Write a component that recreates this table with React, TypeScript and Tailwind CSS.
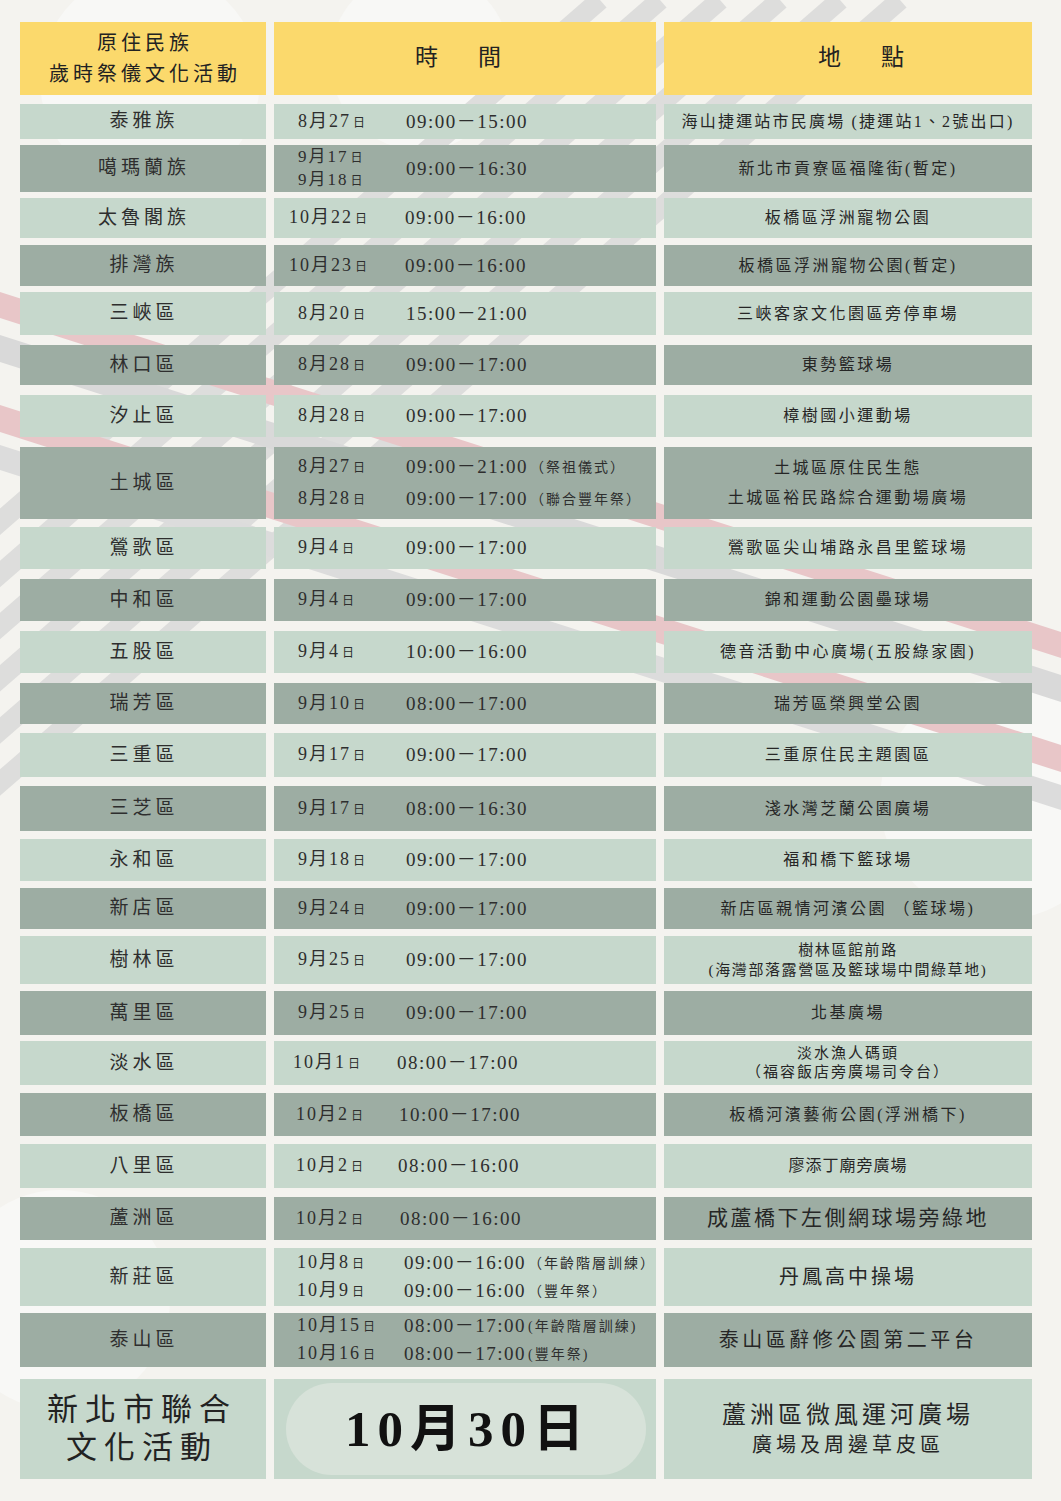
import React from 'react';

type Slot = { dates: string[]; time: string; note?: string };
type Row = {
    name: string;
    dark: boolean;
    box: string;
    slots: Slot[];
    slotCls?: string;
    dateCls?: string;
    place: string[];
    placeCls?: string;
};

const serif = "font-['Liberation_Serif','Noto_Sans_CJK_TC',serif]";

const rows: Row[] = [
    { name: '泰雅族', dark: false, box: 'mt-[9px] h-[35px]', slots: [{ dates: ['8月27'], time: '09:00－15:00' }], place: ['海山捷運站市民廣場 (捷運站1、2號出口)'], placeCls: 'text-[16px] tracking-[2.2px]' },
    { name: '噶瑪蘭族', dark: true, box: 'mt-[6px] h-[47px]', slots: [{ dates: ['9月17', '9月18'], time: '09:00－16:30' }], place: ['新北市貢寮區福隆街(暫定)'] },
    { name: '太魯閣族', dark: false, box: 'mt-[6px] h-[40px]', dateCls: 'pl-[15px] w-[131px]', slots: [{ dates: ['10月22'], time: '09:00－16:00' }], place: ['板橋區浮洲寵物公園'] },
    { name: '排灣族', dark: true, box: 'mt-[7px] h-[41px]', dateCls: 'pl-[15px] w-[131px]', slots: [{ dates: ['10月23'], time: '09:00－16:00' }], place: ['板橋區浮洲寵物公園(暫定)'] },
    { name: '三峽區', dark: false, box: 'mt-[6px] h-[43px]', slots: [{ dates: ['8月20'], time: '15:00－21:00' }], place: ['三峽客家文化園區旁停車場'] },
    { name: '林口區', dark: true, box: 'mt-[10px] h-[40px]', slots: [{ dates: ['8月28'], time: '09:00－17:00' }], place: ['東勢籃球場'] },
    { name: '汐止區', dark: false, box: 'mt-[10px] h-[42px]', slots: [{ dates: ['8月28'], time: '09:00－17:00' }], place: ['樟樹國小運動場'] },
    {
        name: '土城區', dark: true, box: 'mt-[10px] h-[72px]', slotCls: 'gap-[6px]',
        slots: [
            { dates: ['8月27'], time: '09:00－21:00', note: '（祭祖儀式）' },
            { dates: ['8月28'], time: '09:00－17:00', note: '（聯合豐年祭）' },
        ],
        place: ['土城區原住民生態', '土城區裕民路綜合運動場廣場'], placeCls: 'text-[16px] tracking-[2.5px] leading-[30px]',
    },
    { name: '鶯歌區', dark: false, box: 'mt-[8px] h-[42px]', slots: [{ dates: ['9月4'], time: '09:00－17:00' }], place: ['鶯歌區尖山埔路永昌里籃球場'] },
    { name: '中和區', dark: true, box: 'mt-[10px] h-[42px]', slots: [{ dates: ['9月4'], time: '09:00－17:00' }], place: ['錦和運動公園壘球場'] },
    { name: '五股區', dark: false, box: 'mt-[10px] h-[42px]', slots: [{ dates: ['9月4'], time: '10:00－16:00' }], place: ['德音活動中心廣場(五股綠家園)'] },
    { name: '瑞芳區', dark: true, box: 'mt-[10px] h-[41px]', slots: [{ dates: ['9月10'], time: '08:00－17:00' }], place: ['瑞芳區榮興堂公園'] },
    { name: '三重區', dark: false, box: 'mt-[9px] h-[44px]', slots: [{ dates: ['9月17'], time: '09:00－17:00' }], place: ['三重原住民主題園區'] },
    { name: '三芝區', dark: true, box: 'mt-[9px] h-[45px]', slots: [{ dates: ['9月17'], time: '08:00－16:30' }], place: ['淺水灣芝蘭公園廣場'] },
    { name: '永和區', dark: false, box: 'mt-[8px] h-[42px]', slots: [{ dates: ['9月18'], time: '09:00－17:00' }], place: ['福和橋下籃球場'] },
    { name: '新店區', dark: true, box: 'mt-[7px] h-[41px]', slots: [{ dates: ['9月24'], time: '09:00－17:00' }], place: ['新店區親情河濱公園 （籃球場)'] },
    { name: '樹林區', dark: false, box: 'mt-[7px] h-[48px]', slots: [{ dates: ['9月25'], time: '09:00－17:00' }], place: ['樹林區館前路', '(海灣部落露營區及籃球場中間綠草地)'], placeCls: 'text-[15px] tracking-[1.6px] leading-[20px]' },
    { name: '萬里區', dark: true, box: 'mt-[7px] h-[44px]', slots: [{ dates: ['9月25'], time: '09:00－17:00' }], place: ['北基廣場'] },
    { name: '淡水區', dark: false, box: 'mt-[6px] h-[44px]', dateCls: 'pl-[19px] w-[123px]', slots: [{ dates: ['10月1'], time: '08:00－17:00' }], place: ['淡水漁人碼頭', '（福容飯店旁廣場司令台）'], placeCls: 'text-[15px] tracking-[2px] leading-[19px]' },
    { name: '板橋區', dark: true, box: 'mt-[8px] h-[43px]', dateCls: 'pl-[22px] w-[125px]', slots: [{ dates: ['10月2'], time: '10:00－17:00' }], place: ['板橋河濱藝術公園(浮洲橋下)'] },
    { name: '八里區', dark: false, box: 'mt-[8px] h-[44px]', dateCls: 'pl-[22px] w-[124px]', slots: [{ dates: ['10月2'], time: '08:00－16:00' }], place: ['廖添丁廟旁廣場'], placeCls: 'text-[16px] tracking-[1px]' },
    { name: '蘆洲區', dark: true, box: 'mt-[9px] h-[43px]', dateCls: 'pl-[22px] w-[126px]', slots: [{ dates: ['10月2'], time: '08:00－16:00' }], place: ['成蘆橋下左側網球場旁綠地'], placeCls: 'text-[21px] tracking-[2.5px]' },
    {
        name: '新莊區', dark: false, box: 'mt-[8px] h-[58px]', dateCls: 'pl-[23px] w-[130px]', slotCls: 'gap-[2px]',
        slots: [
            { dates: ['10月8'], time: '09:00－16:00', note: '（年齡階層訓練）' },
            { dates: ['10月9'], time: '09:00－16:00', note: '（豐年祭）' },
        ],
        place: ['丹鳳高中操場'], placeCls: 'text-[20px] tracking-[3px]',
    },
    {
        name: '泰山區', dark: true, box: 'mt-[7px] h-[54px]', dateCls: 'pl-[23px] w-[130px]', slotCls: 'gap-[2px]',
        slots: [
            { dates: ['10月15'], time: '08:00－17:00', note: '(年齡階層訓練)' },
            { dates: ['10月16'], time: '08:00－17:00', note: '(豐年祭)' },
        ],
        place: ['泰山區辭修公園第二平台'], placeCls: 'text-[20px] tracking-[3.5px]',
    },
];

function DateText({ d, cls }: { d: string; cls: string }) {
    return (
        <div className={cls}>
            {d}
            <span className="text-[12px] ml-[2px]">日</span>
        </div>
    );
}

// faint diagonal ribbons behind the table
function Background() {
    const grays = [0, 1, 2, 3, 4, 5];
    return (
        <svg className="absolute inset-0" width="1061" height="1501" viewBox="0 0 1061 1501">
            <circle cx="150" cy="80" r="110" fill="#f8f8f6" />
            <circle cx="420" cy="60" r="90" fill="#f8f8f6" />
            <circle cx="1000" cy="800" r="120" fill="#f8f8f6" />
            <circle cx="60" cy="1300" r="110" fill="#f8f8f6" />
            {grays.map((i) => (
                <line
                    key={i}
                    x1={600 + i * 60}
                    y1={0}
                    x2={600 + i * 60 - 1035}
                    y2={900}
                    stroke="#dddddc"
                    strokeWidth="20"
                />
            ))}
            <polygon points="0,292 1061,632 1061,658 0,318" fill="#e8c6c8" />
            <polygon points="0,335 1061,675 1061,702 0,362" fill="#d9d9d9" />
            <polygon points="0,405 1061,745 1061,772 0,432" fill="#e8c6c8" />
            <polygon points="0,445 1061,785 1061,810 0,470" fill="#dcdcdc" />
        </svg>
    );
}

export default function App() {
    const cell = 'flex items-center justify-center';
    return (
        <div className={`relative w-[1061px] h-[1501px] overflow-hidden bg-[#f4f3ef] text-[#2e2e2e] ${serif}`}>
            <Background />
            <div className="relative pt-[22px] pl-[20px]">
                <div className="grid grid-cols-[246px_382px_368px] gap-x-[8px] h-[73px]">
                    <div className={`${cell} flex-col bg-[#fbd96c] text-[20px] leading-[31px] tracking-[4px] pl-[4px] text-[#222]`}>
                        <div>原住民族</div>
                        <div>歲時祭儀文化活動</div>
                    </div>
                    <div className={`${cell} gap-[40px] pr-[14px] bg-[#fbd96c] text-[23px] text-[#222]`}>
                        <span>時</span>
                        <span>間</span>
                    </div>
                    <div className={`${cell} gap-[40px] pl-[26px] bg-[#fbd96c] text-[23px] text-[#222]`}>
                        <span>地</span>
                        <span>點</span>
                    </div>
                </div>

                {rows.map((r) => {
                    const bg = r.dark ? 'bg-[#9dada3]' : 'bg-[#c6d8cc]';
                    return (
                        <div key={r.name} className={`grid grid-cols-[246px_382px_368px] gap-x-[8px] ${r.box}`}>
                            <div className={`${cell} ${bg} text-[19px] tracking-[4px] pl-[2px]`}>{r.name}</div>
                            <div className={`flex flex-col justify-center ${bg} ${r.slotCls ?? ''}`}>
                                {r.slots.map((s, i) => (
                                    <div key={i} className="flex items-center">
                                        <div className={`shrink-0 ${r.dateCls ?? 'pl-[24px] w-[132px]'}`}>
                                            {s.dates.map((d) => (
                                                <DateText
                                                    key={d}
                                                    d={d}
                                                    cls={s.dates.length > 1 ? 'text-[17px] leading-[21px] tracking-[2px]' : 'text-[18px] leading-[24px] tracking-[2px]'}
                                                />
                                            ))}
                                        </div>
                                        <div className="text-[19px] leading-[24px] tracking-[1.5px] whitespace-nowrap">{s.time}</div>
                                        {s.note && (
                                            <div className="text-[14px] tracking-[2px] whitespace-nowrap ml-[2px]">{s.note}</div>
                                        )}
                                    </div>
                                ))}
                            </div>
                            <div className={`${cell} flex-col ${bg} text-center text-[#262626] ${r.placeCls ?? 'text-[16px] tracking-[2.5px]'}`}>
                                {r.place.map((p) => (
                                    <div key={p} className="whitespace-nowrap">{p}</div>
                                ))}
                            </div>
                        </div>
                    );
                })}

                <div className="grid grid-cols-[246px_382px_368px] gap-x-[8px] mt-[12px] h-[100px]">
                    <div className={`${cell} flex-col bg-[#c6d8cc] text-[31px] leading-[38px] tracking-[7px] pr-[2px] text-[#222]`}>
                        <div>新北市聯合</div>
                        <div>文化活動</div>
                    </div>
                    <div className="flex bg-[#c6d8cc] pl-[12px] pr-[10px] py-[4px]">
                        <div className={`${cell} flex-1 rounded-full bg-[#d7e2d9] text-[51px] font-bold tracking-[7px] pl-[4px] text-[#111]`}>
                            10月30日
                        </div>
                    </div>
                    <div className={`${cell} flex-col bg-[#c6d8cc] text-[#262626]`}>
                        <div className="text-[24px] leading-[32px] tracking-[4px]">蘆洲區微風運河廣場</div>
                        <div className="text-[20px] leading-[28px] tracking-[4px]">廣場及周邊草皮區</div>
                    </div>
                </div>
            </div>
        </div>
    );
}
